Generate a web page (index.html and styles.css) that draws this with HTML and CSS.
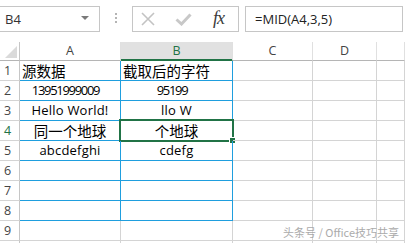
FILE: index.html
```html
<!DOCTYPE html>
<html lang="zh-CN">
<head>
  <meta charset="UTF-8" />
  <meta name="viewport" content="width=device-width, initial-scale=1" />
  <title>MID</title>
  <link rel="stylesheet" href="styles.css">
</head>
<body>

  <!-- formula bar -->
  <div class="toolbar">
    <div class="namebox">
      <span>B4</span>
      <span class="caret"></span>
    </div>
    <div class="grip"><i></i><i></i><i></i></div>
    <div class="fxbtns">
      <svg class="ico-x" width="14" height="14" viewBox="0 0 14 14">
        <path d="M1 1 L13 13 M13 1 L1 13" stroke="#c3c3c3" stroke-width="1.6" fill="none" />
      </svg>
      <svg class="ico-ok" width="17" height="13" viewBox="0 0 17 13">
        <path d="M1.5 6.5 L6.5 11 L15.5 1.5" stroke="#c8c8c8" stroke-width="3" fill="none" />
      </svg>
      <span class="fx">fx</span>
    </div>
    <div class="formula">=MID(A4,3,5)</div>
  </div>

  <!-- sheet -->
  <div class="sheet">
    <div class="cell corner"><i></i></div>
    <div class="cell colhd">A</div>
    <div class="cell colhd on">B</div>
    <div class="cell colhd">C</div>
    <div class="cell colhd">D</div>
    <div class="cell colhd"></div>

    <div class="cell rowhd">1</div>
    <div class="cell b cjk left">源数据</div>
    <div class="cell b cjk left">截取后的字符</div>
    <div class="cell"></div><div class="cell"></div><div class="cell"></div>

    <div class="cell rowhd">2</div>
    <div class="cell b num">13951999009</div>
    <div class="cell b num">95199</div>
    <div class="cell"></div><div class="cell"></div><div class="cell"></div>

    <div class="cell rowhd">3</div>
    <div class="cell b txt">Hello World!</div>
    <div class="cell b txt">llo W</div>
    <div class="cell"></div><div class="cell"></div><div class="cell"></div>

    <div class="cell rowhd on">4</div>
    <div class="cell b cjk">同一个地球</div>
    <div class="cell b cjk active">个地球<span class="sel"></span></div>
    <div class="cell"></div><div class="cell"></div><div class="cell"></div>

    <div class="cell rowhd">5</div>
    <div class="cell b txt">abcdefghi</div>
    <div class="cell b txt">cdefg</div>
    <div class="cell"></div><div class="cell"></div><div class="cell"></div>

    <div class="cell rowhd">6</div>
    <div class="cell b"></div><div class="cell b"></div>
    <div class="cell"></div><div class="cell"></div><div class="cell"></div>

    <div class="cell rowhd">7</div>
    <div class="cell b"></div><div class="cell b"></div>
    <div class="cell"></div><div class="cell"></div><div class="cell"></div>

    <div class="cell rowhd">8</div>
    <div class="cell b"></div><div class="cell b"></div>
    <div class="cell"></div><div class="cell"></div><div class="cell"></div>

    <div class="cell rowhd">9</div>
    <div class="cell"></div><div class="cell"></div>
    <div class="cell"></div><div class="cell"></div><div class="cell"></div>

    <div class="cell rowhd"></div>
    <div class="cell"></div><div class="cell"></div>
    <div class="cell"></div><div class="cell"></div><div class="cell"></div>
  </div>

  <div class="watermark">头条号 / Office技巧共享</div>

</body>
</html>
```

FILE: styles.css
```css
body {
  margin: 0;
  width: 405px;
  height: 243px;
  overflow: hidden;
  background: #fff;
  font-family: "Open Sans", "Noto Sans CJK SC", sans-serif;
  color: #000;
  position: relative;
}

/* formula bar */
.toolbar {
  display: flex;
  align-items: flex-start;
  height: 42px;
  padding-top: 6px;
  box-sizing: border-box;
}
.namebox {
  width: 100px;
  height: 26px;
  box-sizing: border-box;
  border: 1px solid #c6c6c6;
  border-left: none;
  display: flex;
  align-items: center;
  justify-content: space-between;
  padding: 0 10px 0 5px;
  font-size: 13px;
  color: #333;
}
.caret {
  width: 0;
  height: 0;
  border-left: 4px solid transparent;
  border-right: 4px solid transparent;
  border-top: 4px solid #7a7a7a;
  margin-top: -3px;
}
.grip {
  display: flex;
  flex-direction: column;
  gap: 2px;
  margin: 7px 0 0 15px;
}
.grip i {
  width: 2px;
  height: 2px;
  background: #b4b4b4;
}
.fxbtns {
  margin-left: 15px;
  width: 107px;
  height: 26px;
  box-sizing: border-box;
  border: 1px solid #c6c6c6;
  display: flex;
  align-items: center;
  padding-left: 8px;
}
.ico-x { margin-right: 20px; }
.ico-ok { margin-right: 21px; margin-top: 1px; }
.fx {
  font-family: "Liberation Serif", serif;
  font-style: italic;
  font-size: 18px;
  color: #3a3a3a;
  letter-spacing: -1px;
  margin-top: -2px;
}
.formula {
  margin-left: 6px;
  width: 158px;
  height: 26px;
  box-sizing: border-box;
  border: 1px solid #c6c6c6;
  padding-left: 9px;
  font-size: 13px;
  line-height: 24px;
  color: #222;
}

/* grid */
.sheet {
  display: grid;
  grid-template-columns: 20px 101px 112px 80px 64px 1fr;
  grid-template-rows: 19px repeat(9, 20px) 20px;
  height: 201px;
  overflow: hidden;
}
.cell {
  box-sizing: border-box;
  border-right: 1px solid #d4d4d4;
  border-bottom: 1px solid #d4d4d4;
  font-size: 12.5px;
  line-height: 19px;
  text-align: center;
  white-space: nowrap;
  position: relative;
}
.cell.b {
  border-right-color: #1f9ede;
  border-bottom-color: #1f9ede;
}
.corner {
  display: flex;
  justify-content: flex-end;
  align-items: flex-end;
  padding: 0 2px 2px 0;
  border-right-color: #c6c6c6;
  border-bottom-color: #b5b5b5;
}
.corner i {
  width: 0;
  height: 0;
  border-left: 12px solid transparent;
  border-bottom: 12px solid #dadada;
}
.colhd {
  color: #444;
  font-size: 12.5px;
  line-height: 18px;
  border-right-color: #e0e0e0;
  border-bottom-color: #b5b5b5;
}
.colhd.on {
  background: #e1e1e1;
  color: #217346;
  border-bottom-color: #217346;
  box-shadow: inset 0 -1px 0 #217346;
}
.rowhd {
  color: #444;
  font-size: 12.5px;
  text-align: left;
  padding-left: 4px;
  border-right-color: #c6c6c6;
  border-bottom-color: #d4d4d4;
}
.rowhd.on { color: #217346; }
.cjk {
  font-family: "Noto Sans CJK SC", sans-serif;
  font-size: 14.5px;
}
.left {
  text-align: left;
  padding-left: 2px;
}
.num {
  font-size: 13px;
  letter-spacing: -1.3px;
  padding-right: 9px;
}
.txt {
  font-size: 13px;
  letter-spacing: 0.2px;
}

/* selected cell */
.sel {
  position: absolute;
  left: -2px;
  top: -2px;
  right: -2px;
  bottom: -2px;
  border: 2px solid #217346;
}
.sel::after {
  content: "";
  position: absolute;
  right: -4px;
  bottom: -4px;
  width: 5px;
  height: 5px;
  background: #217346;
  border: 1px solid #fff;
}

.watermark {
  position: absolute;
  right: 6px;
  bottom: 3px;
  font-family: "Noto Sans CJK SC", sans-serif;
  font-size: 11px;
  color: #9c9c9c;
  text-shadow: 0 0 2px #fff;
  opacity: 0.85;
}
```
